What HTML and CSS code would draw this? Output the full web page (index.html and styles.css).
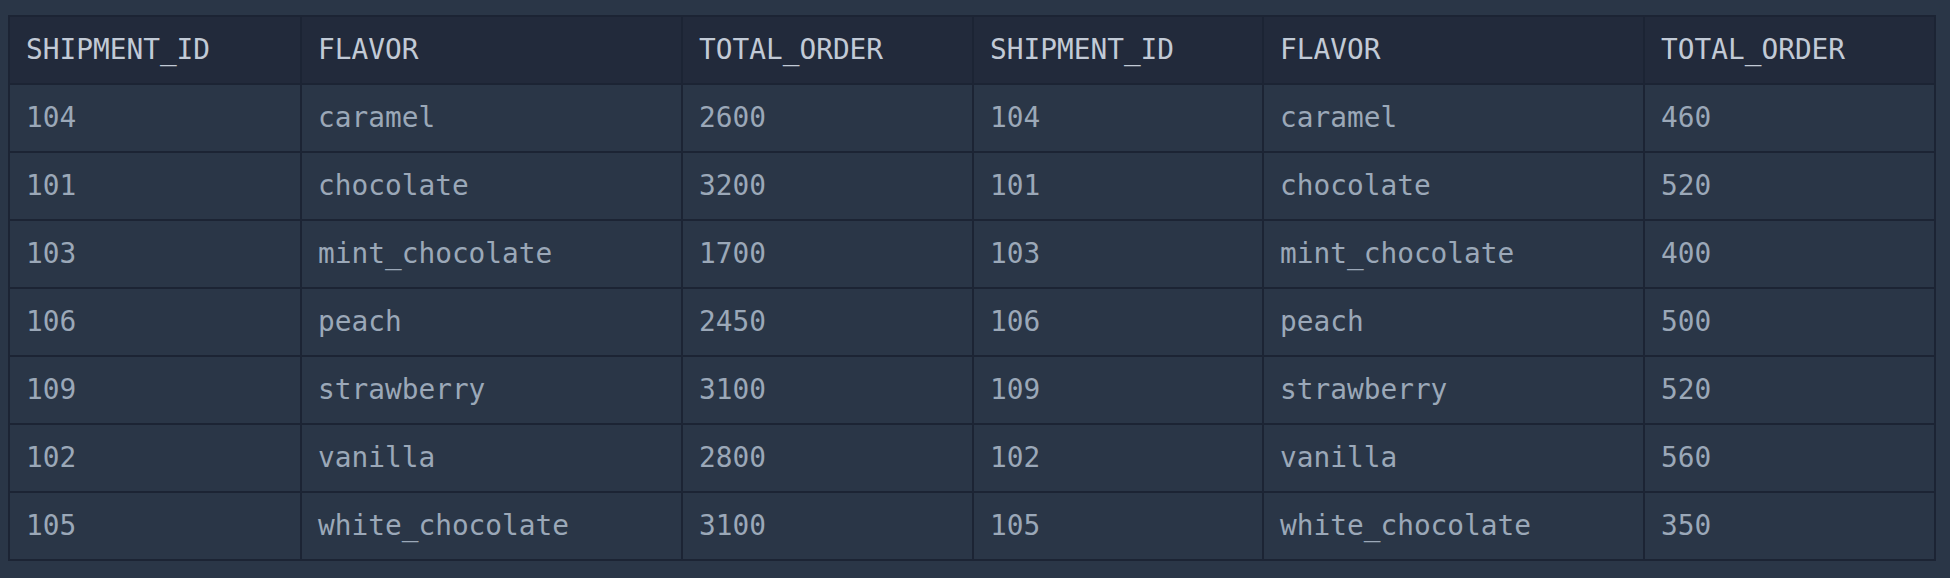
FILE: index.html
```html
<!DOCTYPE html>
<html>
<head>
<meta charset="utf-8">
<link rel="stylesheet" href="styles.css">
</head>
<body>
<div class="wrap">
<table class="grid">
<colgroup>
<col class="c-id"><col class="c-flavor"><col class="c-total">
<col class="c-id2"><col class="c-flavor"><col class="c-total">
</colgroup>
<thead>
<tr><th>SHIPMENT_ID</th><th>FLAVOR</th><th>TOTAL_ORDER</th><th>SHIPMENT_ID</th><th>FLAVOR</th><th>TOTAL_ORDER</th></tr>
</thead>
<tbody>
<tr><td>104</td><td>caramel</td><td>2600</td><td>104</td><td>caramel</td><td>460</td></tr>
<tr><td>101</td><td>chocolate</td><td>3200</td><td>101</td><td>chocolate</td><td>520</td></tr>
<tr><td>103</td><td>mint_chocolate</td><td>1700</td><td>103</td><td>mint_chocolate</td><td>400</td></tr>
<tr><td>106</td><td>peach</td><td>2450</td><td>106</td><td>peach</td><td>500</td></tr>
<tr><td>109</td><td>strawberry</td><td>3100</td><td>109</td><td>strawberry</td><td>520</td></tr>
<tr><td>102</td><td>vanilla</td><td>2800</td><td>102</td><td>vanilla</td><td>560</td></tr>
<tr><td>105</td><td>white_chocolate</td><td>3100</td><td>105</td><td>white_chocolate</td><td>350</td></tr>
</tbody>
</table>
</div>
</body>
</html>
```
FILE: styles.css
```css
html, body {
  margin: 0;
  padding: 0;
  background: #2a3647;
}
.wrap {
  padding: 15px 15px 19px 8px;
}
.grid {
  border-collapse: collapse;
  table-layout: fixed;
  width: 1927px;
  font-family: "DejaVu Sans Mono", monospace;
  font-size: 27.8px;
}
.c-id { width: 292px; }
.c-flavor { width: 381px; }
.c-total { width: 291px; }
.c-id2 { width: 290px; }
.grid th, .grid td {
  border: 2px solid #1c2434;
  height: 68px;
  padding: 0 0 2px 16px;
  text-align: left;
  vertical-align: middle;
  white-space: nowrap;
  box-sizing: border-box;
}
.grid th {
  background: #222a3b;
  color: #c2cad6;
  font-weight: normal;
}
.grid td {
  background: #2a3647;
  color: #9ba8b8;
}
```
